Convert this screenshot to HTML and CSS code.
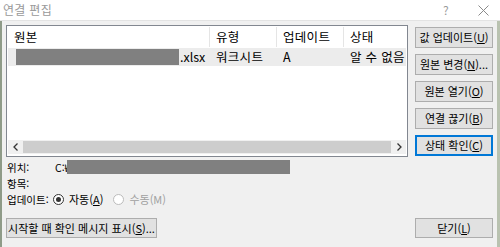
FILE: index.html
```html
<!DOCTYPE html>
<html lang="ko">
<head>
<meta charset="utf-8">
<title>연결 편집</title>
<link rel="stylesheet" href="styles.css">
</head>
<body>
<div class="titlebar">
  <span class="title">연결 편집</span>
  <span class="help">?</span>
  <span class="close"><svg width="11" height="11" viewBox="0 0 11 11"><path d="M0.5 0.5 L10.5 10.5 M10.5 0.5 L0.5 10.5" stroke="#8a8a8a" stroke-width="1" fill="none"/></svg></span>
</div>
<div class="frame">
  <div class="top">
    <div class="listbox">
      <div class="hdr">
        <div class="c c1">원본</div>
        <div class="c c2">유형</div>
        <div class="c c3">업데이트</div>
        <div class="c c4">상태</div>
      </div>
      <div class="row">
        <div class="c c1"><span class="redact r1"></span><span class="ext">.xlsx</span></div>
        <div class="c c2">워크시트</div>
        <div class="c c3">A</div>
        <div class="c c4">알 수 없음</div>
      </div>
      <div class="fill"></div>
      <div class="hscroll">
        <span class="arr"><svg width="6" height="8" viewBox="0 0 6 8"><path d="M4.5 0.5 L1 4 L4.5 7.5" stroke="#333" stroke-width="1.3" fill="none"/></svg></span>
        <div class="thumb"></div>
        <span class="arr"><svg width="6" height="8" viewBox="0 0 6 8"><path d="M1.5 0.5 L5 4 L1.5 7.5" stroke="#333" stroke-width="1.3" fill="none"/></svg></span>
      </div>
    </div>
    <div class="btns">
      <div class="btn">값 업데이트(<u>U</u>)</div>
      <div class="btn">원본 변경(<u>N</u>)...</div>
      <div class="btn">원본 열기(<u>O</u>)</div>
      <div class="btn">연결 끊기(<u>B</u>)</div>
      <div class="btn focus">상태 확인(<u>C</u>)</div>
    </div>
  </div>
  <div class="info">
    <div class="irow"><span class="lbl">위치:</span><span class="val">C:₩</span><span class="redact r2"></span></div>
    <div class="irow"><span class="lbl">항목:</span></div>
    <div class="irow"><span class="lbl">업데이트:</span>
      <span class="radio on"></span><span class="rtxt">자동(<u>A</u>)</span>
      <span class="radio off"></span><span class="rtxt dis">수동(M)</span>
    </div>
  </div>
  <div class="bottom">
    <div class="btn wide">시작할 때 확인 메시지 표시(<u>S</u>)...</div>
    <div class="btn">닫기(<u>L</u>)</div>
  </div>
</div>
</body>
</html>
```

FILE: styles.css
```css
* { box-sizing: border-box; }
html, body { margin: 0; padding: 0; }
body {
  width: 500px;
  height: 247px;
  overflow: hidden;
  background: #f0f0f0;
  font-family: "Noto Sans CJK KR", "Noto Sans", sans-serif;
  color: #000;
}
.titlebar {
  height: 21px;
  background: #fff;
  display: flex;
  align-items: center;
  padding-left: 3px;
  border-bottom: 1px solid #e3e3e3;
}
.title {
  font-size: 12px;
  color: #9a9a9a;
  line-height: 14px;
  flex: 1;
  letter-spacing: 0.3px;
}
.help {
  font-size: 12px;
  color: #9a9a9a;
  width: 35px;
  line-height: 14px;
}
.close {
  width: 22px;
  display: flex;
  padding-top: 1px;
}
.frame {
  height: 226px;
  border-left: 2px solid #8f9b88;
  border-right: 3px solid #b9c2b0;
  padding: 4px 0 0 4px;
  display: flex;
  flex-direction: column;
}
.top {
  display: flex;
  gap: 7px;
}
.listbox {
  width: 402px;
  height: 132px;
  border: 1px solid #828790;
  background: #fff;
  display: flex;
  flex-direction: column;
  padding: 1px;
}
.hdr {
  display: flex;
  height: 20px;
  font-size: 12.5px;
  line-height: 20px;
  letter-spacing: 0.3px;
}
.hdr .c { border-right: 1px solid #e5e5e5; }
.hdr .c4 { border-right: none; }
.c { padding-left: 6px; white-space: nowrap; overflow: hidden; }
.c1 { width: 202px; }
.c2 { width: 67px; }
.c3 { width: 67px; }
.c4 { flex: 1; }
.row {
  display: flex;
  margin-top: 1px;
  height: 18px;
  line-height: 18px;
  font-size: 12.5px;
  letter-spacing: 0.3px;
  background: #ececec;
}
.row .c1 { padding-left: 8px; display: flex; align-items: center; }
.redact { display: inline-block; background: #808080; }
.r1 { width: 163px; height: 16px; }
.ext { padding-left: 1px; letter-spacing: 0; }
.fill { flex: 1; }
.hscroll {
  height: 14px;
  display: flex;
  align-items: center;
  background: #f0f0f0;
  margin-bottom: 1px;
}
.arr {
  width: 15px;
  height: 14px;
  display: flex;
  align-items: center;
  justify-content: center;
}
.thumb {
  flex: 1;
  height: 12px;
  background: #cdcdcd;
}
.btns {
  width: 78px;
  display: flex;
  flex-direction: column;
  gap: 6px;
  padding-top: 2px;
}
.btn {
  height: 21px;
  background: #e1e1e1;
  border: 1px solid #adadad;
  font-size: 11px;
  line-height: 19px;
  text-align: center;
  white-space: nowrap;
}
.btn u { text-underline-offset: 1px; }
.btn.focus {
  border: 1px solid #0078d7;
  box-shadow: inset 0 0 0 1px #0078d7;
}
.info {
  margin-top: 2px;
  font-size: 10.5px;
}
.irow {
  height: 16px;
  display: flex;
  align-items: center;
}
.lbl { width: 47px; padding-left: 1px; }
.val { padding-left: 2px; }
.r2 { width: 223px; height: 14px; margin-left: -3px; }
.radio {
  width: 11px;
  height: 11px;
  border-radius: 50%;
  border: 1px solid #333;
  background: #fff;
  display: inline-flex;
  align-items: center;
  justify-content: center;
  margin-right: 5px;
}
.radio.on::after {
  content: "";
  width: 5px;
  height: 5px;
  border-radius: 50%;
  background: #333;
}
.radio.off { border-color: #bcbcbc; margin-left: 10px; }
.rtxt { font-size: 11px; }
.rtxt.dis { color: #a0a0a0; }
.bottom {
  margin-top: 11px;
  display: flex;
  justify-content: space-between;
  padding-right: 4px;
}
.bottom .btn { height: 20px; line-height: 18px; width: 78px; }
.bottom .btn.wide { width: 151px; }
```
